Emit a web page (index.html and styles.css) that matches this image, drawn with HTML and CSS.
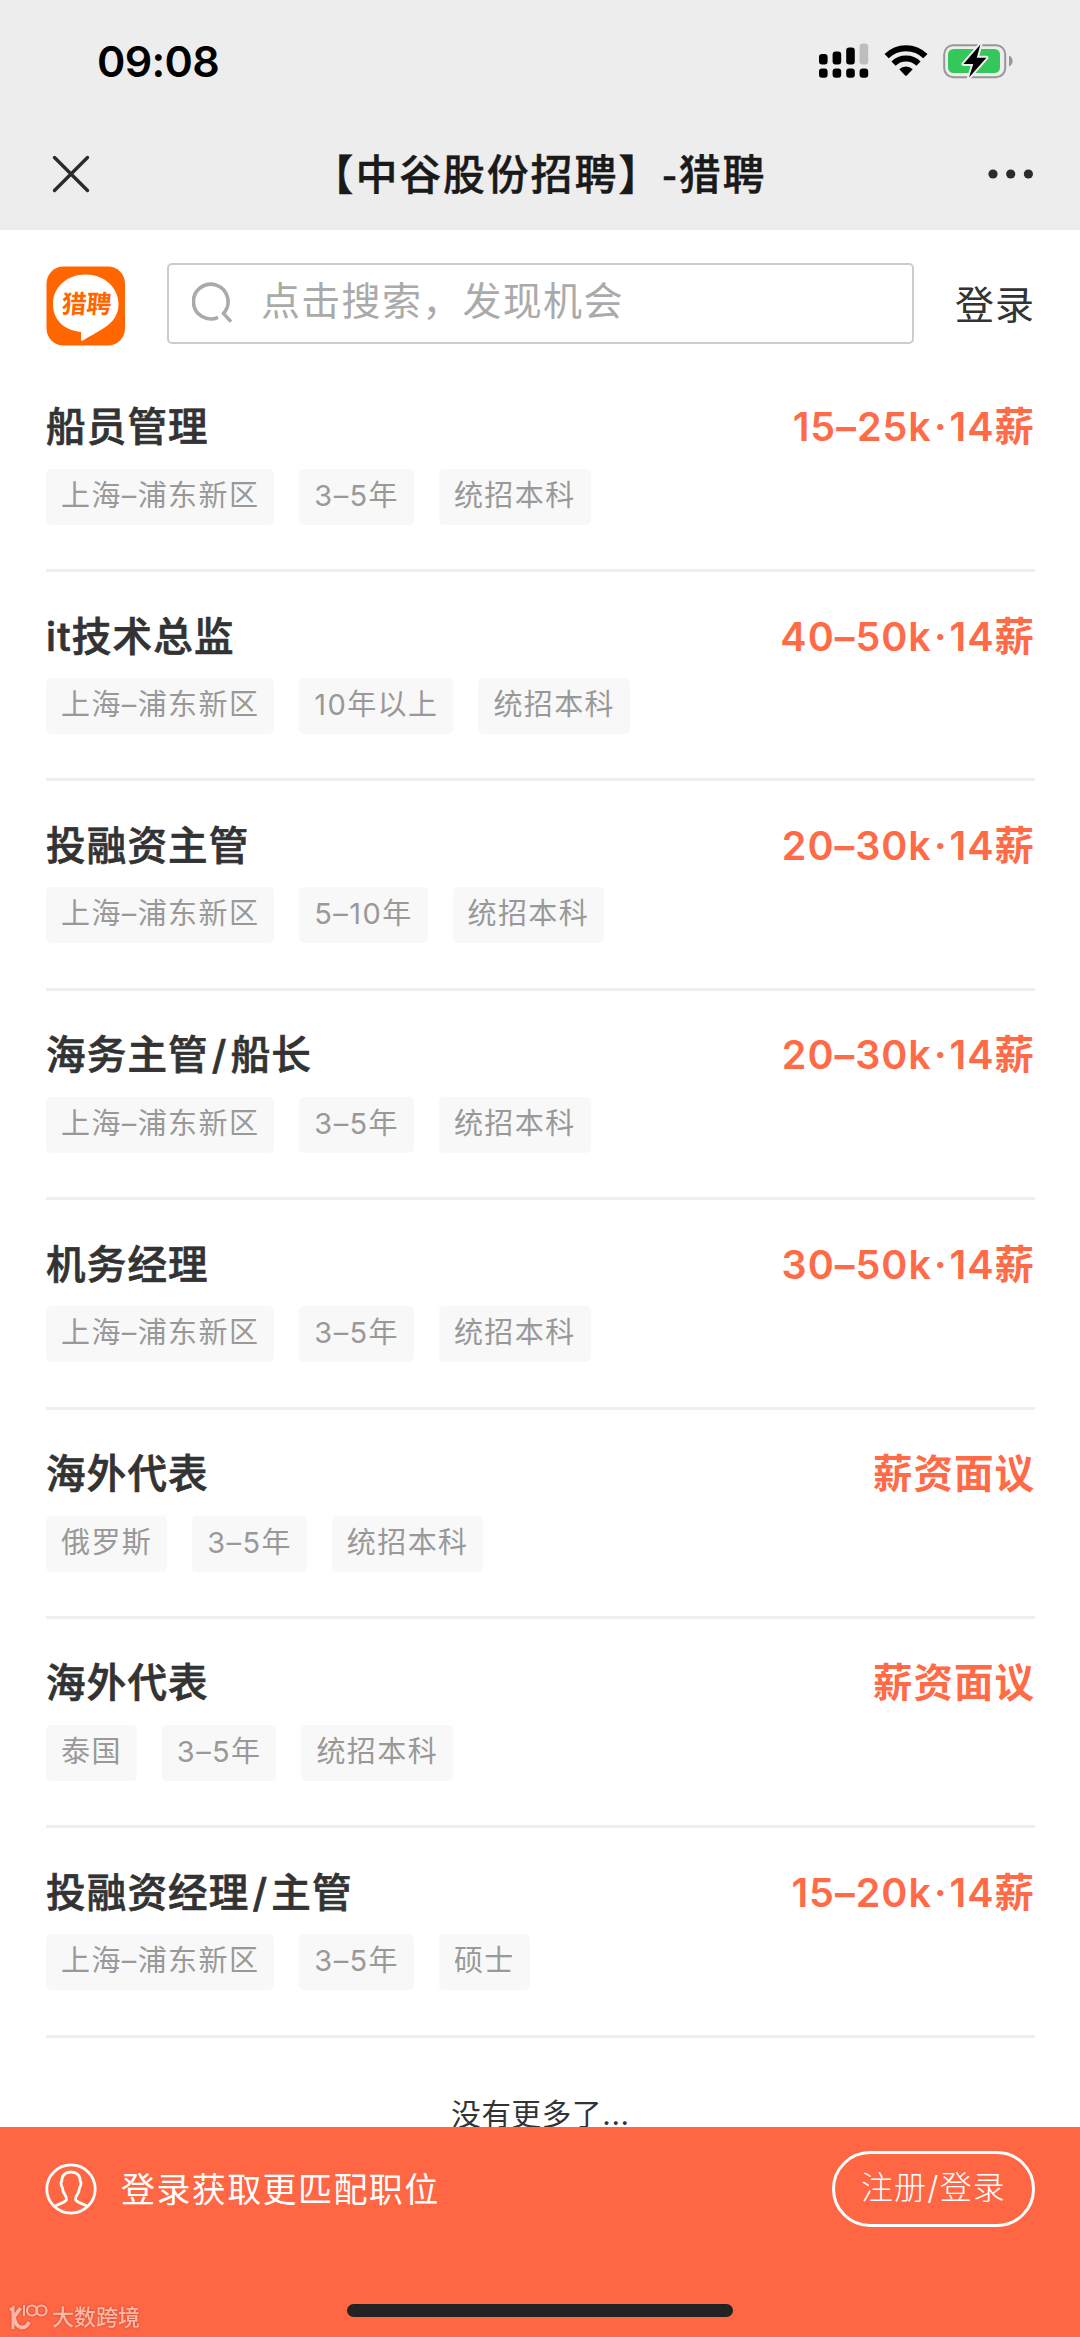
FILE: index.html
```html
<!DOCTYPE html>
<html lang="zh-CN">
<head>
    <meta charset="UTF-8">
    <meta name="viewport" content="width=device-width, initial-scale=1.0">
    <title>【中谷股份招聘】-猎聘</title>
    <link rel="stylesheet" href="styles.css">
</head>
<body>
    <!-- 顶部状态栏 + 导航栏 -->
    <header class="top">
        <div class="status-bar">
            <span class="time">09:08</span>
            <div class="status-icons">
                <svg class="signal" width="50" height="36" viewBox="0 0 50 36">
                    <rect x="0" y="11" width="8.6" height="10.5" rx="3"/>
                    <rect x="13.6" y="8.5" width="8.6" height="13" rx="3"/>
                    <rect x="27.2" y="4.5" width="8.6" height="17" rx="3"/>
                    <rect x="40.6" y="0.5" width="8.6" height="21" rx="3" fill="#bdbdbd"/>
                    <rect x="0" y="25.5" width="8.6" height="9.3" rx="3"/>
                    <rect x="13.6" y="25.5" width="8.6" height="9.3" rx="3"/>
                    <rect x="27.2" y="25.5" width="8.6" height="9.3" rx="3"/>
                    <rect x="40.6" y="25.5" width="8.6" height="9.3" rx="3"/>
                </svg>
                <svg class="wifi" width="44" height="34" viewBox="0 0 44 34">
                    <g fill="none" stroke="#000" stroke-width="6">
                        <path d="M2.6 12.2 A27.5 27.5 0 0 1 41.4 12.2"/>
                        <path d="M9.5 19.6 A17.8 17.8 0 0 1 34.5 19.6"/>
                    </g>
                    <path d="M15.3 25.2 A9.6 9.6 0 0 1 28.7 25.2 L22.8 31.4 Q22 32.2 21.2 31.4 Z"/>
                </svg>
                <svg class="battery" width="72" height="36" viewBox="0 0 72 36">
                    <rect x="1.2" y="2.2" width="61" height="32" rx="9" fill="none" stroke="#979797" stroke-width="2"/>
                    <path d="M66 12.5 Q69.6 14.5 69.6 18 Q69.6 21.5 66 23.5 Z" fill="#979797"/>
                    <rect x="5" y="6" width="52" height="24" rx="5.5" fill="#34c759"/>
                    <path d="M37.4 1.5 L20.5 21 H30.3 L26 34.5 L43.4 14.8 H33.8 Z" fill="#000" stroke="#ededed" stroke-width="4" stroke-linejoin="round" paint-order="stroke"/>
                </svg>
            </div>
        </div>
        <div class="nav-bar">
            <svg class="close" width="38" height="38" viewBox="0 0 38 38">
                <path d="M2.5 2.5 L35.5 35.5 M35.5 2.5 L2.5 35.5" stroke="#2b2b2b" stroke-width="3.4" stroke-linecap="round"/>
            </svg>
            <h1 class="page-title">【中谷股份招聘】-猎聘</h1>
            <svg class="more" width="46" height="10" viewBox="0 0 46 10">
                <circle cx="5" cy="5" r="4.6"/>
                <circle cx="22.7" cy="5" r="4.6"/>
                <circle cx="40.4" cy="5" r="4.6"/>
            </svg>
        </div>
    </header>

    <!-- 搜索栏 -->
    <div class="search-row">
        <svg class="logo" width="80" height="80" viewBox="0 0 80 80">
            <rect x="0.5" y="0.5" width="78.5" height="79" rx="17" fill="#ff6600"/>
            <path d="M39.5 8.5 C58 8.5 72.5 21 72.5 38 C72.5 49 67 56 58 62 C50 67 43 70.5 37 74.5 Q34.5 75.5 35 72.5 V66 C17 64 7 53 7 38 C7 21 21 8.5 39.5 8.5 Z" fill="#fff"/>
            <text class="logo-text" x="15" y="47" transform="skewX(-5) translate(4 0)">猎聘</text>
        </svg>
        <div class="search-box">
            <svg class="search-icon" width="44" height="44" viewBox="0 0 44 44" fill="none" stroke="#aaa" stroke-width="3.6">
                <path d="M26 36.3 A17.3 17.3 0 1 1 31.4 32.4 L39 40.6" stroke-linejoin="round"/>
            </svg>
            <span class="placeholder">点击搜索，发现机会</span>
        </div>
        <a class="login">登录</a>
    </div>

    <!-- 职位列表 -->
    <main class="job-list">
        <div class="job">
            <div class="job-head"><h2>船员管理</h2><span class="salary">15–25k<i>·</i>14薪</span></div>
            <div class="tags"><span>上海–浦东新区</span><span>3–5年</span><span>统招本科</span></div>
        </div>
        <div class="job">
            <div class="job-head"><h2>it技术总监</h2><span class="salary">40–50k<i>·</i>14薪</span></div>
            <div class="tags"><span>上海–浦东新区</span><span>10年以上</span><span>统招本科</span></div>
        </div>
        <div class="job">
            <div class="job-head"><h2>投融资主管</h2><span class="salary">20–30k<i>·</i>14薪</span></div>
            <div class="tags"><span>上海–浦东新区</span><span>5–10年</span><span>统招本科</span></div>
        </div>
        <div class="job">
            <div class="job-head"><h2>海务主管<i>/</i>船长</h2><span class="salary">20–30k<i>·</i>14薪</span></div>
            <div class="tags"><span>上海–浦东新区</span><span>3–5年</span><span>统招本科</span></div>
        </div>
        <div class="job">
            <div class="job-head"><h2>机务经理</h2><span class="salary">30–50k<i>·</i>14薪</span></div>
            <div class="tags"><span>上海–浦东新区</span><span>3–5年</span><span>统招本科</span></div>
        </div>
        <div class="job">
            <div class="job-head"><h2>海外代表</h2><span class="salary">薪资面议</span></div>
            <div class="tags"><span>俄罗斯</span><span>3–5年</span><span>统招本科</span></div>
        </div>
        <div class="job">
            <div class="job-head"><h2>海外代表</h2><span class="salary">薪资面议</span></div>
            <div class="tags"><span>泰国</span><span>3–5年</span><span>统招本科</span></div>
        </div>
        <div class="job">
            <div class="job-head"><h2>投融资经理<i>/</i>主管</h2><span class="salary">15–20k<i>·</i>14薪</span></div>
            <div class="tags"><span>上海–浦东新区</span><span>3–5年</span><span>硕士</span></div>
        </div>
        <p class="no-more">没有更多了...</p>
    </main>

    <!-- 底部登录条 -->
    <footer class="bottom">
        <div class="login-bar">
            <svg class="avatar" width="52" height="52" viewBox="0 0 52 52" fill="none" stroke="#fff" stroke-width="2.8">
                <circle cx="26" cy="26" r="24.2"/>
                <path d="M9.5 43.5 C13 40.5 20.5 40 21.5 36.5 C22 33 17.5 30.5 17.5 25 C15.5 22 15.8 19 16.8 18 C16.8 12 20.5 9 26 9 C31.5 9 35.2 12 35.2 18 C36.2 19 36.5 22 34.5 25 C34.5 30.5 30 33 30.5 36.5 C31.5 40 39 40.5 42.5 43.5"/>
            </svg>
            <span class="login-tip">登录获取更匹配职位</span>
            <a class="register">注册/登录</a>
        </div>
        <div class="home-indicator"></div>
        <div class="watermark">
            <svg width="39" height="28" viewBox="0 0 39 28" fill="none" stroke="#ffb8a6" stroke-width="3">
                <path d="M1 7 L4 5 V26"/>
                <path d="M11.5 5 L5 14 M5 14 C7 27 17 27 20 19" stroke-width="3.8"/>
                <path d="M15 2 V13" stroke-width="2"/>
                <circle cx="23" cy="7.5" r="5" stroke-width="2.2"/>
                <circle cx="32.5" cy="7.5" r="5" stroke-width="2.2"/>
            </svg>
            <span>大数跨境</span>
        </div>
    </footer>
</body>
</html>
```
FILE: styles.css
```css
* {
    box-sizing: border-box;
    margin: 0;
    padding: 0;
}
body {
    width: 1080px;
    height: 2337px;
    overflow: hidden;
    display: flex;
    flex-direction: column;
    background: #fff;
    color: #333;
    font-family: Inter, 'Noto Sans CJK SC', sans-serif;
}
svg { display: block; flex: none; }
i { font-style: normal; }

/* 顶部 */
.top {
    height: 230px;
    flex: none;
    background: #ededed;
}
.status-bar {
    height: 122px;
    padding: 0 65px 0 97px;
    display: flex;
    justify-content: space-between;
    align-items: center;
}
.time {
    font-size: 43px;
    font-weight: 600;
    color: #000;
    line-height: 50px;
    letter-spacing: -0.7px;
}
.status-icons { display: flex; align-items: center; }
.wifi { margin-left: 15px; }
.battery { margin-left: 15px; }
.nav-bar {
    height: 104px;
    padding: 0 46px 0 52px;
    display: flex;
    justify-content: space-between;
    align-items: center;
}
.page-title {
    padding-bottom: 4px;
    font-family: 'Noto Sans CJK SC', sans-serif;
    font-size: 42px;
    font-weight: 500;
    line-height: 60px;
    letter-spacing: 1.8px;
    color: #1a1a1a;
    -webkit-text-stroke: 0.4px #1a1a1a;
}
.more { fill: #2b2b2b; }

/* 搜索 */
.search-row {
    height: 146px;
    flex: none;
    padding: 0 45px 0 46px;
    display: flex;
    align-items: center;
}
.logo { margin-top: 5px; }
.logo-text {
    font-family: 'Noto Sans CJK SC', sans-serif;
    font-size: 25px;
    font-weight: 700;
    fill: #ff6600;
}
.search-box {
    width: 747px;
    height: 81px;
    margin-left: 41px;
    padding-left: 23px;
    display: flex;
    align-items: center;
    border: 2px solid #ccc;
    border-radius: 5px;
}
.placeholder {
    margin-left: 25px;
    padding-bottom: 4px;
    font-size: 39px;
    font-weight: 400;
    letter-spacing: 1.3px;
    color: #aaa;
    line-height: 56px;
}
.login {
    margin-left: auto;
    padding-top: 3px;
    font-size: 39px;
    letter-spacing: 1px;
    line-height: 56px;
}

/* 职位 */
.job-list {
    flex: 1;
    min-height: 0;
    overflow: hidden;
    padding: 0 45px 0 46px;
}
.job {
    height: 209.4px;
    padding-top: 26px;
    border-bottom: 3px solid #eee;
}
.job:first-child { height: 196px; padding-top: 12.6px; }
.job-head {
    height: 70px;
    display: flex;
    justify-content: space-between;
    align-items: center;
}
.job h2 {
    font-size: 39.5px;
    font-weight: 500;
    letter-spacing: 1.2px;
    -webkit-text-stroke: 0.7px #333;
}
.job h2 i { margin: 0 3px; }
.salary {
    font-size: 39.5px;
    font-weight: 600;
    letter-spacing: 1px;
    color: #ff6b47;
}
.salary i { margin: 0 2px; }
.tags {
    margin-top: 10px;
    display: flex;
    gap: 25px;
}
.tags span {
    height: 56px;
    padding: 0 15px;
    border-radius: 5px;
    background: #f8f8f8;
    color: #999;
    font-size: 29px;
    font-weight: 400;
    letter-spacing: 1.4px;
    line-height: 54px;
    white-space: nowrap;
}
.no-more {
    margin-top: 54px;
    text-align: center;
    font-size: 29.5px;
    font-weight: 400;
    letter-spacing: 0.7px;
    line-height: 44px;
}

/* 底部 */
.bottom {
    position: relative;
    height: 210px;
    flex: none;
    background: #ff6644;
    color: #fff;
}
.login-bar {
    height: 124px;
    padding: 0 45px;
    display: flex;
    align-items: center;
}
.login-tip {
    margin-left: 24px;
    padding-bottom: 4px;
    font-size: 34px;
    font-weight: 400;
    letter-spacing: 1.4px;
}
.register {
    width: 203px;
    height: 76px;
    margin-left: auto;
    border: 3px solid #fff;
    border-radius: 38px;
    text-align: center;
    font-size: 32px;
    font-weight: 300;
    line-height: 68px;
    letter-spacing: 1.2px;
}
.home-indicator {
    width: 386px;
    height: 13px;
    margin: 53px auto 0;
    border-radius: 7px;
    background: #222;
}
/* 水印浮在底栏左下角 */
.watermark {
    position: absolute;
    left: 9px;
    bottom: 6px;
    display: flex;
    align-items: center;
    gap: 4px;
    color: #ffb8a6;
    font-size: 22px;
    font-weight: 500;
    line-height: 28px;
    filter: drop-shadow(0 0 1px rgba(150, 50, 30, 0.6));
}
```
